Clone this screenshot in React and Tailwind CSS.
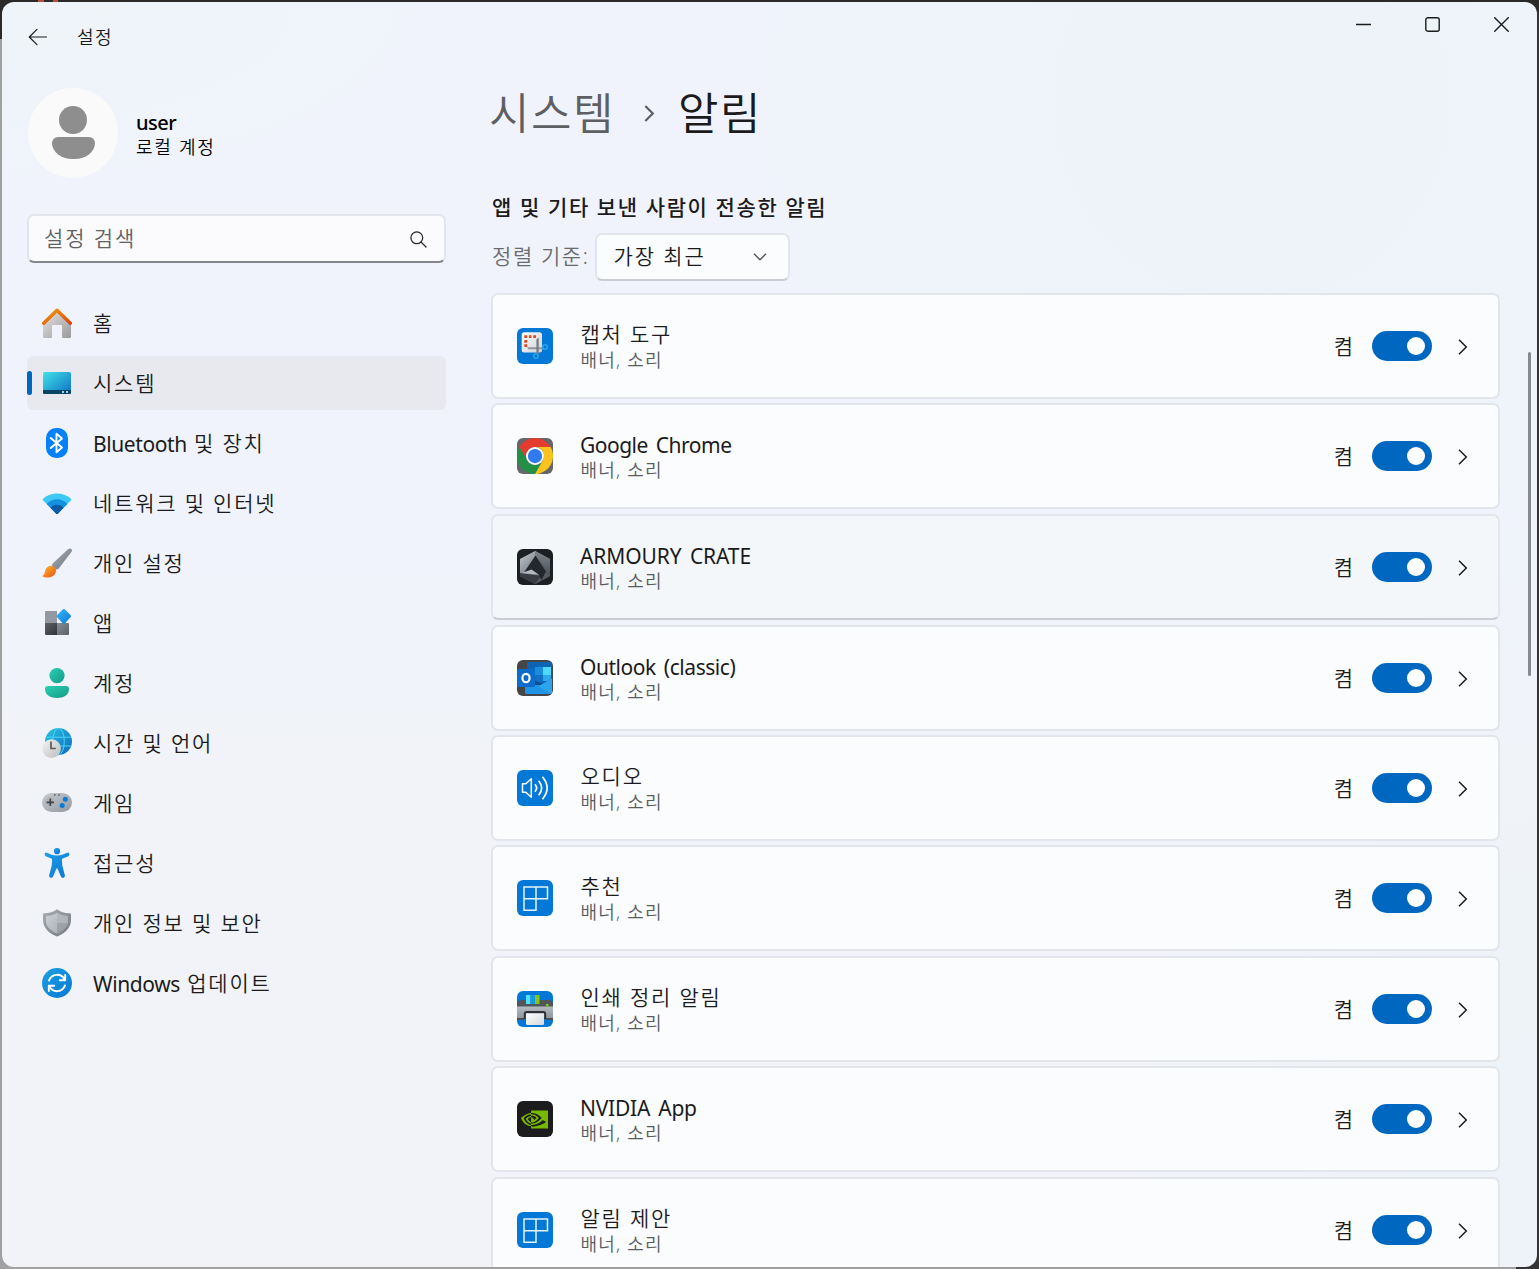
import React from "react";
import { SiNvidia } from "react-icons/si";

const LATIN = /([A-Za-z()]+(?: [A-Za-z()]+)*)/;

function Mixed({ text, latin = "tracking-[-0.4px] align-[-1px] font-normal" }) {
  return text.split(LATIN).map((part, i) =>
    LATIN.test(part) ? (
      <span key={i} className={latin}>{part}</span>
    ) : (
      <span key={i}>{part}</span>
    )
  );
}

function Grad({ id, from, to, x2 = 1, y2 = 1 }) {
  return (
    <linearGradient id={id} x1="0" y1="0" x2={x2} y2={y2}>
      <stop offset="0" stopColor={from} />
      <stop offset="1" stopColor={to} />
    </linearGradient>
  );
}

function NavSvg({ children }) {
  return <svg viewBox="0 0 30 30" className="size-[30px] shrink-0" fill="none">{children}</svg>;
}

const HomeIcon = () => (
  <NavSvg>
    <defs>
      <Grad id="hb" from="#e4e4e4" to="#9a9a9a" />
      <Grad id="hr" from="#f29a10" to="#d9480c" />
    </defs>
    <path d="M1 15.5 15 3 29 15.5V28.8a1.2 1.2 0 0 1-1.2 1.2H21.2a1.2 1.2 0 0 1-1.2-1.2V18a1 1 0 0 0-1-1h-8a1 1 0 0 0-1 1V28.8a1.2 1.2 0 0 1-1.2 1.2H2.2A1.2 1.2 0 0 1 1 28.8Z" fill="url(#hb)" />
    <path d="M1.7 15.2 15 2.3 28.3 15.2" stroke="url(#hr)" strokeWidth="3.5" strokeLinecap="round" strokeLinejoin="round" />
  </NavSvg>
);

const SystemIcon = () => (
  <NavSvg>
    <defs><Grad id="sy" from="#3fe3e8" to="#0f6fc4" /></defs>
    <rect x="1" y="4" width="28" height="22" rx="1.5" fill="url(#sy)" />
    <path d="M1 22H29V24.5A1.5 1.5 0 0 1 27.5 26H2.5A1.5 1.5 0 0 1 1 24.5Z" fill="#0b4566" />
    <path d="M20 23h2v2h-2zM24 23h2v2h-2z" fill="#9fd4e8" />
  </NavSvg>
);

const BluetoothIcon = () => (
  <NavSvg>
    <rect x="4" width="22" height="30" rx="10" fill="#0480fb" />
    <path d="M8.7 10 20 19.5 14.5 24.3V5.7L20 10.5 8.7 20" stroke="#fff" strokeWidth="1.9" strokeLinecap="round" strokeLinejoin="round" />
  </NavSvg>
);

const WifiIcon = () => (
  <NavSvg>
    <path d="M1.2 12.4Q.3 11.4 1.3 10.5C9.3 3.7 20.7 3.7 28.7 10.5Q29.7 11.4 28.8 12.4L16 25.5Q15 26.5 14 25.5Z" fill="#3cc9f5" />
    <path d="M4.7 15.9C10.5 9.8 19.5 9.8 25.3 15.9L16 25.5Q15 26.5 14 25.5Z" fill="#1490df" />
    <path d="M8.5 19.8C12 15.7 18 15.7 21.5 19.8L16 25.5Q15 26.5 14 25.5Z" fill="#0c59a4" />
  </NavSvg>
);

const BrushIcon = () => (
  <NavSvg>
    <defs>
      <Grad id="bh" from="#a9b2ba" to="#6b747c" />
      <Grad id="bb" from="#fdbb22" to="#e9531c" />
    </defs>
    <path d="M26.3 1C28.5-.6 31 1.3 29.6 3.8L16.5 20.8 13.2 21.9 9.6 18 10.6 15.4Z" fill="url(#bh)" />
    <path d="M5 19.3C8 16.9 11.4 17.9 13 20c1.8 2.6.9 6.4-2.4 8.2C7.5 29.9 3.2 29.7.8 28.4.3 28.1.5 27.6 1 27.4 3.4 26.4 2.5 21.6 5 19.3Z" fill="url(#bb)" />
  </NavSvg>
);

const AppsIcon = () => (
  <NavSvg>
    <defs>
      <Grad id="ad" from="#37b9f8" to="#0a78d6" />
      <Grad id="ak" from="#5f6468" to="#2f3336" />
      <Grad id="am" from="#858c94" to="#5c636b" />
    </defs>
    <path d="M4 3H15V15H3V4A1 1 0 0 1 4 3Z" fill="#9299a2" />
    <path d="M3 15H15V27H4A1 1 0 0 1 3 26Z" fill="url(#ak)" />
    <path d="M15 15H26A1 1 0 0 1 27 16V26A1 1 0 0 1 26 27H15Z" fill="url(#am)" />
    <path d="M20.9 1.3Q21.8.5 22.7 1.3L28.7 7.3Q29.6 8.2 28.7 9.1L22.7 15.4Q21.8 16.2 20.9 15.4L14.9 9.1Q14 8.2 14.9 7.3Z" fill="url(#ad)" />
  </NavSvg>
);

const AccountIcon = () => (
  <NavSvg>
    <defs><Grad id="ac" from="#2bd0b6" to="#139a84" /></defs>
    <circle cx="15" cy="7.6" r="7.6" fill="url(#ac)" />
    <path d="M6 18H24A3 3 0 0 1 27 21C27 27 21.5 30 15 30S3 27 3 21A3 3 0 0 1 6 18Z" fill="url(#ac)" />
  </NavSvg>
);

const TimeIcon = () => (
  <NavSvg>
    <defs>
      <Grad id="tg" from="#2cc5e6" to="#0d68bd" />
      <Grad id="tc" from="#f4f4f4" to="#bdbdbd" />
    </defs>
    <circle cx="16.5" cy="13.5" r="13.5" fill="url(#tg)" />
    <g stroke="#4ed4f2" strokeWidth="1">
      <ellipse cx="16.5" cy="13.5" rx="5.8" ry="13.3" />
      <path d="M4.5 9.2H28.7M3.5 18H29" />
    </g>
    <circle cx="9.5" cy="20.6" r="9.4" fill="url(#tc)" />
    <path d="M9 13.5V20.5H13.8" stroke="#5a5a5a" strokeWidth="1.7" />
  </NavSvg>
);

const GameIcon = () => (
  <NavSvg>
    <defs><Grad id="gm" from="#c9cdd1" to="#91989f" /></defs>
    <rect y="5" width="30" height="19" rx="9.5" fill="url(#gm)" />
    <circle cx="8.3" cy="14.3" r="5.5" fill="#b0b5ba" />
    <path d="M8.3 10.6V18M4.6 14.3H12" stroke="#3f4347" strokeWidth="1.7" />
    <circle cx="23.3" cy="11.3" r="2.5" fill="#0c7bd8" />
    <circle cx="20.2" cy="17.4" r="2.5" fill="#0c7bd8" />
    <path d="M12 6.2h1.5v1.5H12zM16.3 6.2h1.5v1.5h-1.5z" fill="#55595d" />
  </NavSvg>
);

const AccessIcon = () => (
  <NavSvg>
    <defs><Grad id="ax" from="#1f9fe8" to="#0a76d2" /></defs>
    <circle cx="15" cy="3.2" r="3.1" fill="url(#ax)" />
    <path d="M4.7 4.7C8.5 6.3 11 7.5 15 7.5S21.5 6.3 25.3 4.7C27.5 4 28 7.2 26.3 8.2L20.7 10.5C20 10.9 19.8 11.2 19.9 12L20.3 17.5 22.9 27.5C23.2 30 19.8 30.8 18.9 28.5L15.6 20.8Q15 19.8 14.4 20.8L11.1 28.5C10.2 30.8 6.8 30 7.1 27.5L9.7 17.5 10.1 12C10.2 11.2 10 10.9 9.3 10.5L3.7 8.2C2 7.2 2.5 4 4.7 4.7Z" fill="url(#ax)" />
  </NavSvg>
);

const ShieldIcon = () => (
  <NavSvg>
    <defs>
      <Grad id="sh" from="#a8adb2" to="#73797f" />
      <Grad id="si" from="#ccd0d4" to="#a4a9ae" />
    </defs>
    <path d="M15 1.3C18.5 4 23 5.3 28 5.2Q29 5.2 29 6.3V12C29 19.500 23.500 25 15.600 28.300Q15 28.500 14.400 28.300C6.500 25 1 19.500 1 12V6.300Q1 5.200 2 5.200C7 5.300 11.500 4 15 1.300Z" fill="url(#sh)" />
    <path d="M15 4.700C18.200 6.900 22 7.900 26 8V13C26 18.500 21.500 22.700 15 25.500C8.500 22.700 4 18.500 4 13V8C8 7.900 11.800 6.900 15 4.700Z" fill="url(#si)" />
    <path d="M15 4.700V15H25.700Q26 14 26 13V8C22 7.900 18.200 6.900 15 4.700Z" fill="#aeb3b8" fillOpacity=".6" />
    <path d="M15 15V25.500C21 22.900 25.200 19.500 25.700 15Z" fill="#8f959b" fillOpacity=".6" />
  </NavSvg>
);

const UpdateIcon = () => (
  <NavSvg>
    <defs><Grad id="up" from="#1c9fe2" to="#0878d4" /></defs>
    <circle cx="15" cy="15" r="15" fill="url(#up)" />
    <g stroke="#fff" strokeWidth="1.9" strokeLinecap="round" strokeLinejoin="round">
      <path d="M7 12.6C9.5 5.4 19 4.7 22.8 11.7M23.2 7V12.3H17.8" />
      <path d="M23 17.4C20.5 24.6 11 25.3 7.2 18.3M6.8 23V17.7H12.2" />
    </g>
  </NavSvg>
);

function AppSvg({ bg, children }) {
  return (
    <svg viewBox="0 0 36 36" className="size-9 shrink-0 rounded-[6px]" fill="none">
      <rect width="36" height="36" fill={bg} />
      {children}
    </svg>
  );
}

const SnipIcon = () => (
  <AppSvg bg="#0378d6">
    <defs><Grad id="sn" from="#fbfbfb" to="#cfd3d6" /></defs>
    <rect x="4.7" y="4.3" width="20.3" height="20.3" rx="2.5" fill="url(#sn)" />
    <path d="M7.3 7.2h2.9v2.9H7.3zM11.9 7.2h2.6v2.9h-2.6zM16.3 7.2h2.7v2.9h-2.7zM7.3 12h2.9v2.7H7.3zM7.3 16.3h2.9v2.7H7.3z" fill="#dd4a1b" />
    <path d="M10 19.2 26.5 19.2V21.3L11.5 21.3Z" fill="#8f9499" />
    <path d="M21.7 9.5V26.5H19.4V11.5Z" fill="#777c82" />
    <circle cx="19" cy="28" r="2.3" stroke="#25a3ee" strokeWidth="1.6" />
    <circle cx="28" cy="19" r="2.3" stroke="#25a3ee" strokeWidth="1.6" />
  </AppSvg>
);

const ChromeIcon = () => (
  <AppSvg bg="#63676c">
    <g transform="scale(.75)">
      <path d="M24 12H44.78A24 24 0 0 0 3.22 12L13.6 30A12 12 0 0 1 24 12Z" fill="#e33b2e" />
      <path d="M13.6 30 3.22 12A24 24 0 0 0 24 48L34.4 30A12 12 0 0 1 13.6 30Z" fill="#229146" />
      <path d="M34.4 30 24 48A24 24 0 0 0 44.78 12H24A12 12 0 0 1 34.4 30Z" fill="#fcc31e" />
      <circle cx="24" cy="24" r="12" fill="#fff" />
      <circle cx="24" cy="24" r="9.5" fill="#2f7bee" />
    </g>
  </AppSvg>
);

const ArmouryIcon = () => (
  <AppSvg bg="#1c1f23">
    <defs>
      <Grad id="ar" from="#c3cad2" to="#33373c" />
      <Grad id="as" from="#7d858d" to="#4a4f55" x2={0} />
    </defs>
    <path d="M18 2 33 10V27L18 35 3 27V10Z" fill="url(#ar)" />
    <path d="M18 2 33 10V27L27 22 18 6Z" fill="url(#as)" />
    <path d="M3 27V24L25 27 18 35Z" fill="#393d42" />
    <path d="M24 27 27 22 33 27 18 35Z" fill="#565c62" />
    <path d="M18.5 6.5 29 22.5 24.5 31 21.5 25.5 7 23.5Z" fill="#24272b" />
    <path d="M5 24 14.500 20.500 22 25.800Z" fill="#b4bac1" />
  </AppSvg>
);

const OutlookIcon = () => (
  <AppSvg bg="#464646">
    <path d="M11.5 2H33.5A1.5 1.5 0 0 1 35 3.5V24H10V3.5A1.5 1.5 0 0 1 11.5 2Z" fill="#0b64b4" />
    <path d="M18 7H26V15H18Z" fill="#1b8ddd" />
    <path d="M26 7H34V15H26Z" fill="#4fd9fb" />
    <path d="M18 15H26V22H18Z" fill="#1271c5" />
    <path d="M26 15H34V21H26Z" fill="#2aa9ee" />
    <path d="M18 20.5 26 24 35 18.5V25H18Z" fill="#0c4f95" />
    <path d="M8 25H24L35 18.5V32.5A1.5 1.5 0 0 1 33.5 34H9.5A1.5 1.5 0 0 1 8 32.5Z" fill="#1f93e6" />
    <path d="M21 26.5 35 18.5V32.5Q35 33.3 34.5 33.7Z" fill="#2ba6ee" />
    <rect y="9" width="18" height="18" rx="1.5" fill="#0b6cca" />
    <ellipse cx="9" cy="18" rx="3.6" ry="4.2" stroke="#fff" strokeWidth="2.2" />
  </AppSvg>
);

const AudioIcon = () => (
  <AppSvg bg="#0378d6">
    <g stroke="#fff" strokeWidth="1.5">
      <path d="M5.5 13.7H8.8L14.3 8.8V27.2L8.8 22.3H5.5Z" strokeLinejoin="round" />
      <path d="M18.3 14.8Q21 18 18.3 21.2M22 11.3Q27.3 18 22 24.7M25.8 7.3Q34.5 18 25.8 28.7" strokeLinecap="round" strokeWidth="1.7" />
    </g>
  </AppSvg>
);

const TilesIcon = () => (
  <AppSvg bg="#0378d6">
    <path d="M7 7H30.5V18.8H19V30.3H7ZM19 7V18.8H7" stroke="#e6f3fd" strokeWidth="1.5" />
  </AppSvg>
);

const PrinterIcon = () => (
  <AppSvg bg="#0378d6">
    <defs>
      <Grad id="pr" from="#b4bac1" to="#8f969d" x2={0} />
      <Grad id="pp" from="#ffffff" to="#d3d8dd" />
    </defs>
    <path d="M3 9H33L36 11.5V16H0V11.5Z" fill="#50565c" />
    <path d="M9 4H13.5V13H9Z" fill="#4fe0fa" />
    <path d="M13.5 4H18V13H13.5Z" fill="#1597e8" />
    <path d="M18 4H22.5V13H18Z" fill="#84c614" />
    <path d="M0 15.5H36V27H0Z" fill="url(#pr)" />
    <path d="M29 13h2.5v2.5H29z" fill="#84c614" />
    <path d="M0 27H7V29H0ZM29 27H36V29H29Z" fill="#4b5157" />
    <path d="M7.8 28V23Q7.8 21 9.8 21H26.2Q28.2 21 28.2 23V28" stroke="#2d3136" strokeWidth="2" />
    <path d="M9 22.5H27V32.5A1.5 1.5 0 0 1 25.5 34H10.5A1.5 1.5 0 0 1 9 32.5Z" fill="url(#pp)" />
  </AppSvg>
);

const NvidiaIcon = () => (
  <div className="flex size-9 shrink-0 items-center justify-center rounded-[6px] bg-[#1c1c1c] pr-px">
    <SiNvidia className="size-[27px] text-[#76b900]" />
  </div>
);

const NAV = [
  { label: "홈", Icon: HomeIcon },
  { label: "시스템", Icon: SystemIcon, active: true },
  { label: "Bluetooth 및 장치", Icon: BluetoothIcon },
  { label: "네트워크 및 인터넷", Icon: WifiIcon },
  { label: "개인 설정", Icon: BrushIcon },
  { label: "앱", Icon: AppsIcon },
  { label: "계정", Icon: AccountIcon },
  { label: "시간 및 언어", Icon: TimeIcon },
  { label: "게임", Icon: GameIcon },
  { label: "접근성", Icon: AccessIcon },
  { label: "개인 정보 및 보안", Icon: ShieldIcon },
  { label: "Windows 업데이트", Icon: UpdateIcon },
];

const APPS = [
  { name: "캡처 도구", Icon: SnipIcon, gap: "" },
  { name: "Google Chrome", Icon: ChromeIcon, gap: "mt-1", latin: "tracking-[-0.5px] [word-spacing:3px]" },
  { name: "ARMOURY CRATE", Icon: ArmouryIcon, gap: "mt-[5px]", latin: "tracking-[-0.1px] [word-spacing:3px]", hover: true },
  { name: "Outlook (classic)", Icon: OutlookIcon, gap: "mt-[5px]", latin: "tracking-[-0.45px] [word-spacing:3px]" },
  { name: "오디오", Icon: AudioIcon, gap: "mt-1" },
  { name: "추천", Icon: TilesIcon, gap: "mt-1" },
  { name: "인쇄 정리 알림", Icon: PrinterIcon, gap: "mt-[5px]" },
  { name: "NVIDIA App", Icon: NvidiaIcon, gap: "mt-1", latin: "tracking-[-0.25px] [word-spacing:3px]" },
  { name: "알림 제안", Icon: TilesIcon, gap: "mt-[5px]" },
];

function AppCard({ name, Icon, gap, hover, latin }) {
  return (
    <div
      className={`flex h-[106px] shrink-0 items-center rounded-[7px] border-2 pr-[30px] pl-6 ${gap} ${
        hover ? "border-[#e3e6ec] border-b-[#c9ccd2] bg-[#f4f7fa]" : "border-[#e2e5eb] bg-[#fbfcfe]"
      }`}
    >
      <Icon />
      <div className="ml-[27px] flex flex-col">
        <span className={`text-[21px] leading-[28px] whitespace-pre ${latin ? `pt-px font-normal ${latin}` : "pl-[0.5px] tracking-[1.8px]"}`}>{name}</span>
        <span className={`pl-[0.5px] text-[18px] leading-[24px] tracking-[1.2px] text-[#5a5b5e] ${latin ? "-mt-px" : ""}`}>배너, 소리</span>
      </div>
      <span className="ml-auto text-[21px] leading-[28px]">켬</span>
      <div className="ml-[19px] flex h-[30px] w-[60px] items-center justify-end rounded-full bg-[#0067c0] pr-[7px]">
        <div className="size-[18px] rounded-full bg-white" />
      </div>
      <svg viewBox="0 0 10 16" className="mt-px ml-[26px] h-4 w-[10px]" fill="none" stroke="#1b1b1b" strokeWidth="1.5">
        <path d="M1 .7 8.3 8 1 15.3" />
      </svg>
    </div>
  );
}

export default function App() {
  return (
    <div className="h-[1269px] w-[1539px] overflow-hidden bg-[linear-gradient(90deg,#a0a0a0_0_1516px,#343434_1516px)] font-['Noto_Sans','Noto_Sans_CJK_KR',sans-serif] font-[350] text-[#1b1b1b]">
      <div className="h-full bg-[linear-gradient(90deg,transparent_38px,#b4503f_38px_44px,transparent_44px_53px,#b4503f_53px_58px,transparent_58px),linear-gradient(#2c2929,#2c2929),linear-gradient(#2c2929,#2c2929)] bg-[length:100%_2px,100%_12px,12px_39px] bg-no-repeat p-[2px]">
        <div className="flex h-[1265px] w-[1535px] flex-col overflow-hidden rounded-[12px] bg-[#f0f3fa] bg-[radial-gradient(ellipse_420px_180px_at_0_0,#eef4f8,transparent),radial-gradient(ellipse_500px_500px_at_1250px_100px,#edf3f8,transparent),radial-gradient(ellipse_400px_700px_at_100%_1200px,#edf3f8,transparent),linear-gradient(#f0f3fb_45%,#f1f3f8_60%)]">
          <div className="flex min-h-0 flex-1">
            <aside className="flex w-[444px] shrink-0 flex-col pl-[25px]">
              <div className="flex h-[70px] items-center pl-px">
                <svg viewBox="0 0 20 18" className="h-[18px] w-5" fill="none" stroke="#1b1b1b" strokeWidth="1.2" strokeLinejoin="round" strokeLinecap="round">
                  <path d="M18.5 9H1.5M9 1.3 1.3 9 9 16.7" />
                </svg>
                <span className="ml-[29px] text-[18px] tracking-[1.4px]">설정</span>
              </div>
              <div className="mt-4 flex items-center pl-px">
                <div className="flex size-[90px] flex-col items-center rounded-full bg-[#fafafa] pt-[18px]">
                  <div className="size-7 rounded-full bg-[#8e8e8e]" />
                  <div className="mt-[3px] h-[22px] w-[43px] rounded-t-[6px] rounded-b-[20px_16px] bg-[#8e8e8e]" />
                </div>
                <div className="ml-[18px] flex flex-col pt-[3px] text-black">
                  <span className="text-[20px] leading-[26px] font-medium tracking-[-0.5px]">user</span>
                  <span className="-mt-px text-[18px] leading-[24px] tracking-[1.7px]">로컬 계정</span>
                </div>
              </div>
              <div className="mt-[36px] flex h-[49px] w-[419px] items-center justify-between rounded-[7px] border-2 border-[#e2e5eb] border-b-[#868789] bg-[#fbfbfd] pr-[17px] pl-[15px]">
                <span className="text-[21px] tracking-[1.9px] text-[#616164]">설정 검색</span>
                <svg viewBox="0 0 17 17" className="mt-[2px] size-[17px]" fill="none" stroke="#2b2b2b" strokeWidth="1.3" strokeLinecap="round">
                  <circle cx="6.8" cy="6.8" r="5.9" />
                  <path d="M11 11 16 16" />
                </svg>
              </div>
              <nav className="mt-[33px] flex w-[419px] flex-col gap-[6px]">
                {NAV.map(({ label, Icon, active }) => (
                  <div key={label} className={`flex h-[54px] items-center rounded-[6px] ${active ? "bg-[#e8e9ee]" : ""}`}>
                    <div className={`h-6 w-[5px] rounded-full ${active ? "bg-[#0067c0]" : ""}`} />
                    <div className="ml-[10px] flex"><Icon /></div>
                    <span className="ml-[21px] pt-[2px] text-[21px] tracking-[1.8px] whitespace-pre"><Mixed text={label} /></span>
                  </div>
                ))}
              </nav>
            </aside>
            <main className="flex min-w-0 flex-1 flex-col pr-[37px] pl-[45px]">
              <div className="-mr-[37px] flex h-[44px] shrink-0 items-center justify-end gap-[54px] pr-[28px]">
                <svg viewBox="0 0 15 15" className="size-[15px]" stroke="#1b1b1b" strokeWidth="1.5"><path d="M0 7.5H15" /></svg>
                <svg viewBox="0 0 15 15" className="size-[15px]" fill="none" stroke="#1b1b1b" strokeWidth="1.4"><rect x=".8" y=".8" width="13.4" height="13.4" rx="2" /></svg>
                <svg viewBox="0 0 15 15" className="size-[15px]" stroke="#1b1b1b" strokeWidth="1.4"><path d="M.3.3 14.7 14.7M14.7.3.3 14.7" /></svg>
              </div>
              <div className="mt-[37px] -ml-[2px] flex h-[60px] shrink-0 items-center text-[44px] leading-[60px] tracking-[1.5px]">
                <span className="text-[#5e5f62]">시스템</span>
                <svg viewBox="0 0 11 17" className="ml-[29px] h-[17px] w-[11px]" fill="none" stroke="#5e5f62" strokeWidth="2.2"><path d="M1.3 1 8.8 8.5 1.3 16" /></svg>
                <span className="ml-[23px]">알림</span>
              </div>
              <h2 className="mt-[50px] shrink-0 pl-px text-[21px] leading-[28px] font-medium tracking-[1.6px]">앱 및 기타 보낸 사람이 전송한 알림</h2>
              <div className="mt-[12px] flex h-[48px] shrink-0 items-center pl-px">
                <span className="-mt-px text-[21px] tracking-[1.6px] text-[#6a6b6e]">정렬 기준:</span>
                <div className="ml-[6px] flex h-[48px] w-[195px] items-center justify-between rounded-[7px] border-2 border-[#e2e5eb] border-b-[#c9ccd2] bg-[#fbfcfe] pr-[21px] pl-4">
                  <span className="text-[21px] tracking-[1.9px]">가장 최근</span>
                  <svg viewBox="0 0 14 8" className="h-2 w-[14px]" fill="none" stroke="#55565a" strokeWidth="1.4"><path d="M1 .8 7 6.8 13 .8" /></svg>
                </div>
              </div>
              <div className="mt-[12px] flex min-h-0 w-[1009px] flex-1 flex-col">
                {APPS.map((app) => <AppCard key={app.name} {...app} />)}
              </div>
            </main>
            <div className="-ml-[9px] flex w-[9px] shrink-0 pt-[350px]">
              <div className="h-[324px] w-[3px] rounded-full bg-[#868a90]" />
            </div>
          </div>
        </div>
      </div>
    </div>
  );
}
